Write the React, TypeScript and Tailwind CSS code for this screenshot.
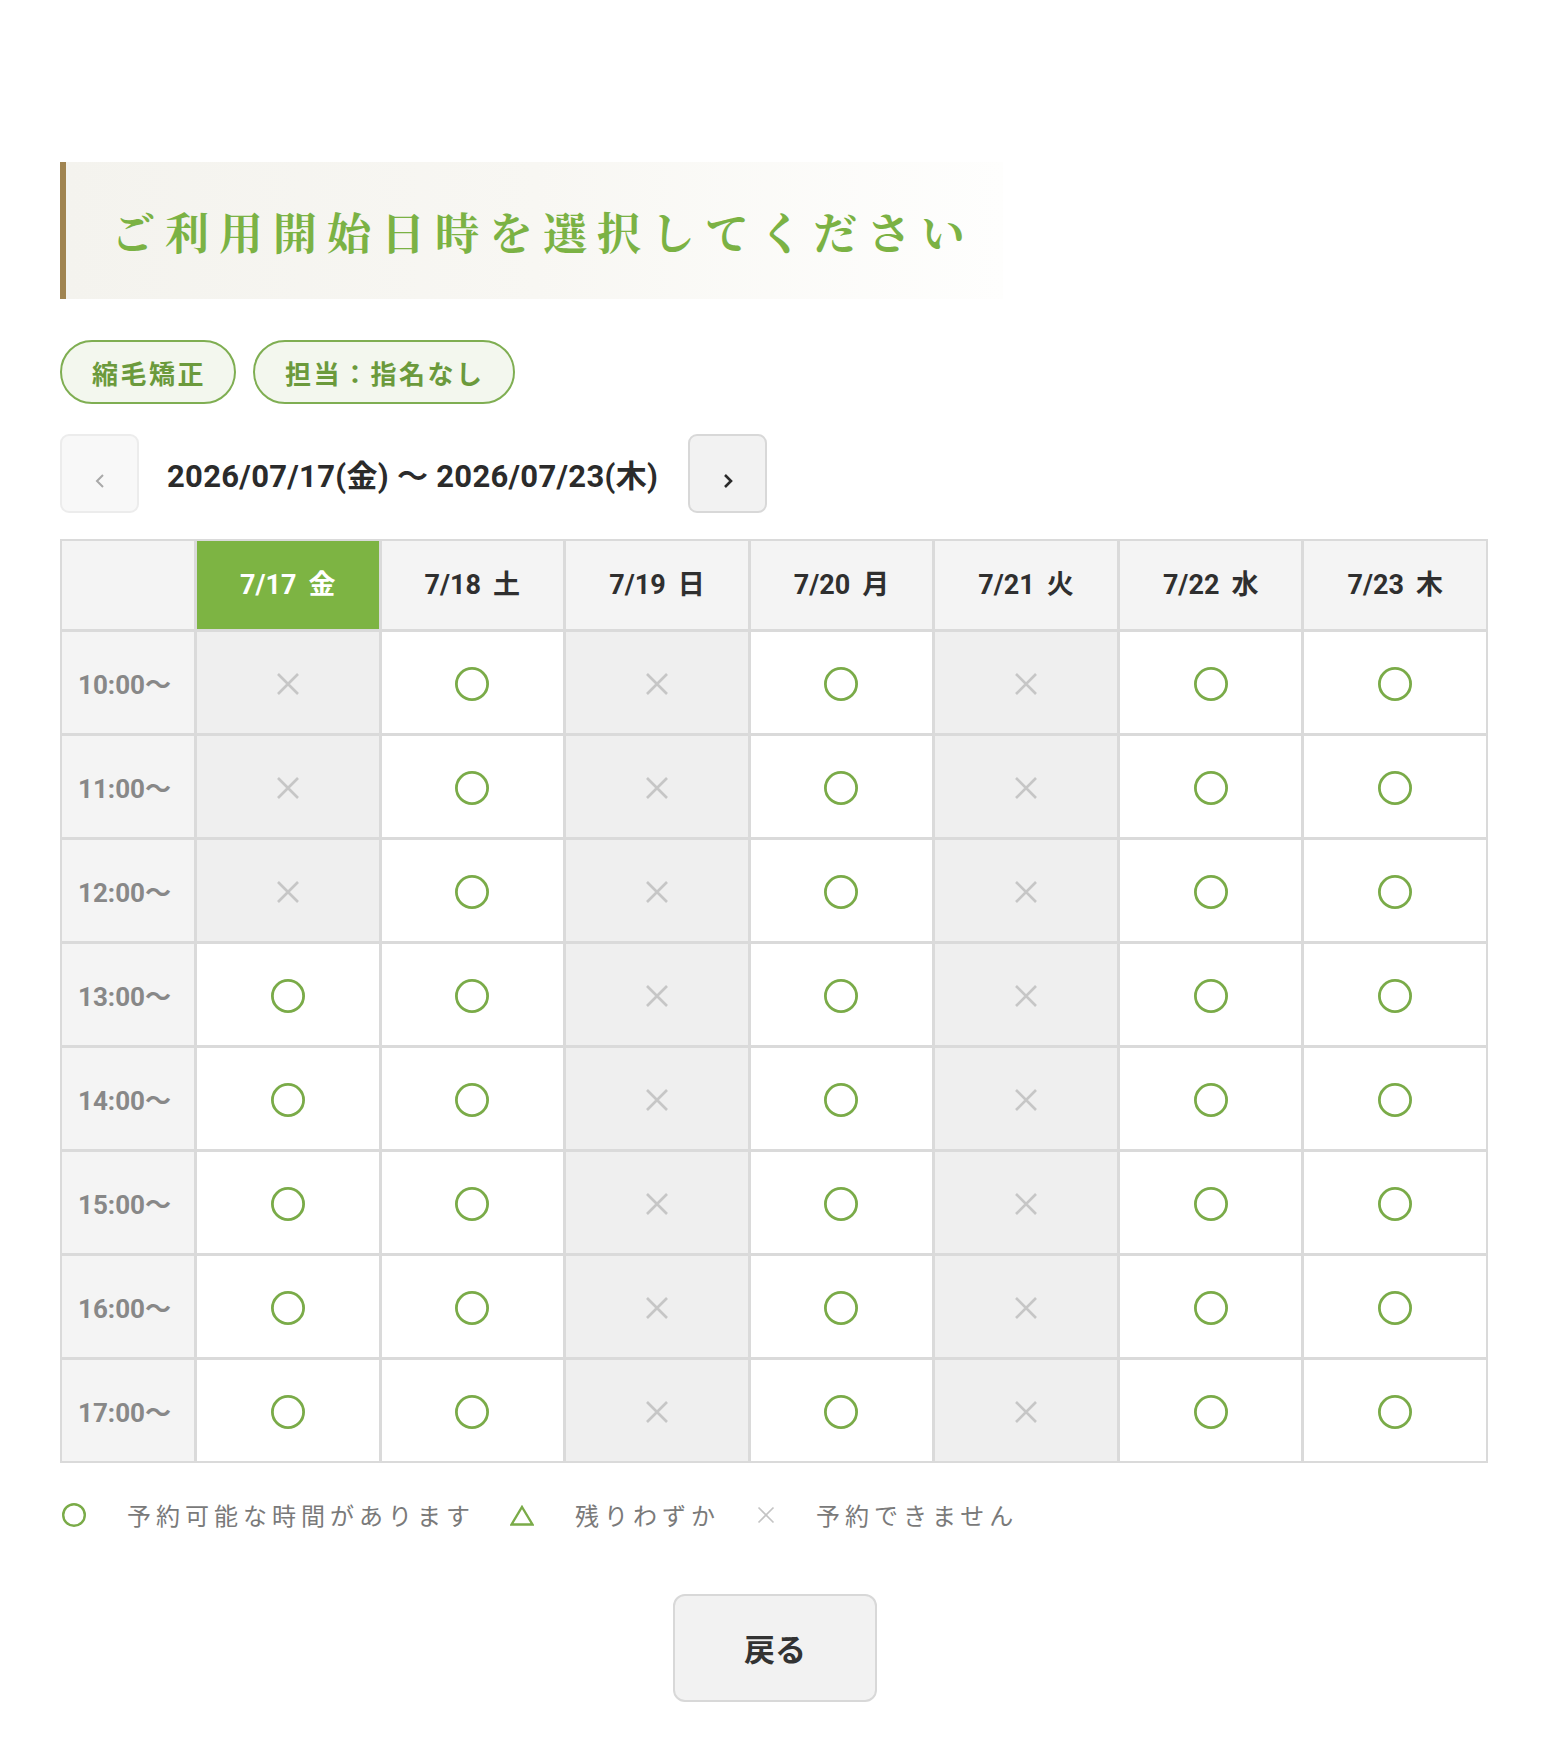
import React from "react";

type Slot = "ok" | "ng";

const days = [
  { label: "7/17", wd: "金", selected: true },
  { label: "7/18", wd: "土" },
  { label: "7/19", wd: "日" },
  { label: "7/20", wd: "月" },
  { label: "7/21", wd: "火" },
  { label: "7/22", wd: "水" },
  { label: "7/23", wd: "木" },
];

const times = ["10:00", "11:00", "12:00", "13:00", "14:00", "15:00", "16:00", "17:00"];

function slotFor(day: number, row: number): Slot {
  if (day === 2 || day === 4) return "ng";
  if (day === 0 && row < 3) return "ng";
  return "ok";
}

function Circle({ size = 34, stroke = 2.8 }: { size?: number; stroke?: number }) {
  const r = size / 2 - stroke / 2;
  return (
    <svg width={size} height={size} viewBox={`0 0 ${size} ${size}`}>
      <circle cx={size / 2} cy={size / 2} r={r} fill="none" stroke="#7aab48" strokeWidth={stroke} />
    </svg>
  );
}

function Cross({ size = 24, stroke = 2.6, color = "#c6c6c6" }: { size?: number; stroke?: number; color?: string }) {
  return (
    <svg width={size} height={size} viewBox="0 0 24 24">
      <path d="M2 2 L22 22 M22 2 L2 22" stroke={color} strokeWidth={stroke} fill="none" />
    </svg>
  );
}

function Triangle() {
  return (
    <svg width={24} height={21} viewBox="0 0 24 21">
      <path d="M12 2 L22.5 19.5 L1.5 19.5 Z" fill="none" stroke="#7aab48" strokeWidth={2.4} />
    </svg>
  );
}

const sans = "font-['Roboto','Noto_Sans_CJK_JP',sans-serif]";

export default function App() {
  return (
    <div className={`min-h-[1760px] bg-white pl-[60px] pr-[58px] pt-[162px] pb-[59px] ${sans}`}>
      {/* page title */}
      <div className="flex h-[137px] w-[943px] items-center border-l-[6px] border-[#a08450] bg-linear-to-r from-[#f4f3ee] via-[#f8f7f3] to-[#fefefd] pl-[45px]">
        <h1 className="font-['Noto_Serif_CJK_JP','Noto_Sans_CJK_JP',serif] text-[44px] font-bold leading-none tracking-[10px] text-[#7bb244]">
          ご利用開始日時を選択してください
        </h1>
      </div>

      {/* selected conditions */}
      <div className="mt-[41px] flex gap-[17px]">
        {["縮毛矯正", "担当：指名なし"].map((t) => (
          <div
            key={t}
            className="flex h-[64px] items-center rounded-full border-2 border-[#7fae52] bg-[#f3f7ee] pl-[30px] pr-[28px] font-['Noto_Sans_CJK_JP',sans-serif] text-[26px] font-bold tracking-[2.5px] text-[#6b9a3c]"
          >
            {t}
          </div>
        ))}
      </div>

      {/* week navigation */}
      <div className="mt-[30px] flex items-center gap-[28px]">
        <button className="flex h-[79px] w-[79px] items-center justify-center rounded-[9px] border-2 border-[#ececec] bg-[#f8f8f8] pt-[14px]">
          <svg width="12" height="16" viewBox="0 0 12 16">
            <path d="M9 2 L3 8 L9 14" fill="none" stroke="#a9a9a9" strokeWidth="2" />
          </svg>
        </button>
        <div className="pt-[5px] text-[31px] font-bold leading-none tracking-[0.3px] text-[#2b2b2b]">
          2026/07/17(金) 〜 2026/07/23(木)
        </div>
        <button className="ml-[2px] flex h-[79px] w-[79px] items-center justify-center rounded-[9px] border-2 border-[#d8d8d8] bg-[#f2f2f2] pt-[14px]">
          <svg width="12" height="16" viewBox="0 0 12 16">
            <path d="M3 2 L9 8 L3 14" fill="none" stroke="#2b2b2b" strokeWidth="2.6" />
          </svg>
        </button>
      </div>

      {/* availability table */}
      <div className="mt-[26px] grid grid-cols-[132px_repeat(7,minmax(0,1fr))] gap-[3px] bg-[#dadada] p-[2px]">
        <div className="h-[88px] bg-[#f4f4f4]" />
        {days.map((d) => (
          <div
            key={d.label}
            className={`flex h-[88px] items-center justify-center text-[27px] font-bold ${
              d.selected ? "bg-[#7db443] text-white" : "bg-[#f4f4f4] text-[#2f2f2f]"
            }`}
          >
            <span>{d.label}</span>
            <span className="ml-[12px]">{d.wd}</span>
          </div>
        ))}
        {times.map((t, r) => (
          <React.Fragment key={t}>
            <div className="flex h-[101px] items-center bg-[#f4f4f4] pl-[16px] pt-[6px] text-[26px] font-bold text-[#888888]">
              {t}〜
            </div>
            {days.map((d, c) => {
              const s = slotFor(c, r);
              return (
                <div
                  key={d.label}
                  className={`flex h-[101px] items-center justify-center pt-[3px] ${s === "ok" ? "bg-white" : "bg-[#efefef]"}`}
                >
                  {s === "ok" ? <Circle /> : <Cross />}
                </div>
              );
            })}
          </React.Fragment>
        ))}
      </div>

      {/* legend */}
      <div className="mt-[34px] flex items-center pl-[2px] font-['Noto_Sans_CJK_JP',sans-serif] text-[24px] tracking-[5px] text-[#7a7a7a]">
        <Circle size={24} stroke={2.4} />
        <span className="ml-[41px]">予約可能な時間があります</span>
        <span className="ml-[35px] flex">
          <Triangle />
        </span>
        <span className="ml-[41px]">残りわずか</span>
        <span className="ml-[37px] flex">
          <Cross size={18} stroke={2.2} color="#c4c4c4" />
        </span>
        <span className="ml-[41px]">予約できません</span>
      </div>

      {/* back */}
      <div className="mt-[61px] flex justify-center pl-[2px]">
        <button className="flex h-[108px] w-[204px] items-center justify-center rounded-[12px] border-2 border-[#d8d8d8] bg-[#f2f2f2] font-['Noto_Sans_CJK_JP',sans-serif] text-[31px] font-bold text-[#333333]">
          戻る
        </button>
      </div>
    </div>
  );
}
